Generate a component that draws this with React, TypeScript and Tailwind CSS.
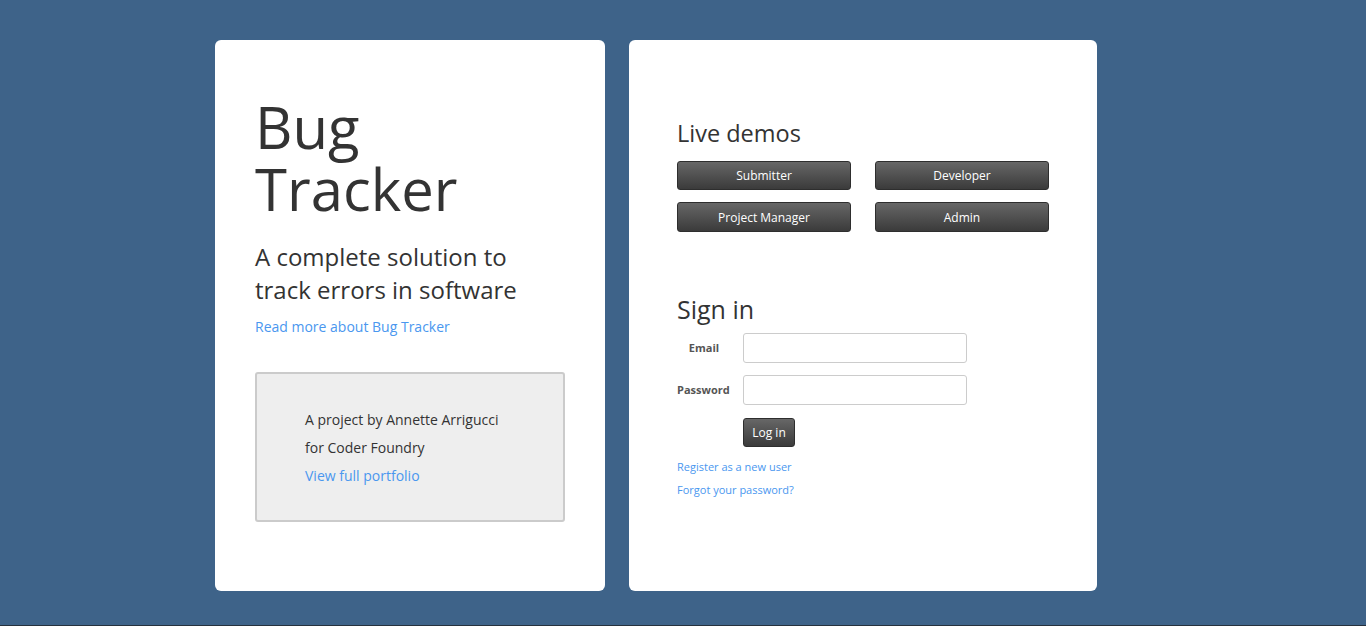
import React from "react";

const demoBtn =
  "h-[29px] w-[174px] rounded-[3px] border border-[#2e2e2e] bg-gradient-to-b from-[#676767] to-[#3b3b3b] pt-px text-[12px] text-white";

export default function App() {
  return (
    <div
      className="h-[626px] w-full overflow-hidden bg-[#3e6389] border-b border-[#26313d]"
      style={{ fontFamily: '"Open Sans", "Noto Sans", sans-serif' }}
    >
      <div className="flex gap-6 pl-[215px] pt-10">
        {/* Left card */}
        <div className="h-[551px] w-[390px] rounded-md bg-white pl-[40px] pt-[56px] text-[#333]">
          <h1 className="text-[58px] leading-[62px] font-normal">
            Bug
            <br />
            Tracker
          </h1>
          <p className="mt-[20px] text-[24px] leading-[33px]">
            A complete solution to
            <br />
            track errors in software
          </p>
          <a className="mt-[11px] block text-[14px] leading-[20px] text-[#4a97ef]">
            Read more about Bug Tracker
          </a>
          <div className="mt-[35px] h-[150px] w-[310px] rounded-[3px] border-2 border-[#cbcbcb] bg-[#eeeeee] pl-[48px] pt-[32px] text-[14px] leading-[28px]">
            <p>A project by Annette Arrigucci</p>
            <p>for Coder Foundry</p>
            <a className="block text-[#4a97ef]">View full portfolio</a>
          </div>
        </div>

        {/* Right card */}
        <div className="h-[551px] w-[468px] rounded-md bg-white pl-[48px] pt-[78px] text-[#333]">
          <h2 className="text-[23.5px] leading-[30px]">Live demos</h2>
          <div className="mt-[13px] grid w-[372px] grid-cols-2 gap-x-6 gap-y-[12px]">
            <button className={demoBtn}>Submitter</button>
            <button className={demoBtn}>Developer</button>
            <button className={`${demoBtn} h-[30px]`}>Project Manager</button>
            <button className={`${demoBtn} h-[30px]`}>Admin</button>
          </div>

          <h2 className="mt-[62px] text-[25px] leading-[30px]">Sign in</h2>
          <div className="mt-[9px] flex flex-col gap-3">
            <div className="flex items-center">
              <label className="w-[66px] text-center text-[11px] font-bold text-[#555] pr-[12px]">
                Email
              </label>
              <input className="h-[30px] w-[224px] rounded-[3px] border border-[#cccccc] bg-white" />
            </div>
            <div className="flex items-center">
              <label className="w-[66px] text-left text-[11px] font-bold text-[#555]">
                Password
              </label>
              <input
                type="password"
                className="h-[30px] w-[224px] rounded-[3px] border border-[#cccccc] bg-white"
              />
            </div>
            <div className="flex pl-[66px] pt-px">
              <button className="h-[29px] w-[52px] rounded-[3px] border border-[#2e2e2e] bg-gradient-to-b from-[#676767] to-[#3b3b3b] pt-px text-[12px] text-white">
                Log in
              </button>
            </div>
          </div>
          <div className="mt-[12px] flex flex-col gap-[7px] text-[11px] leading-[16px] text-[#4a97ef]">
            <a>Register as a new user</a>
            <a>Forgot your password?</a>
          </div>
        </div>
      </div>
    </div>
  );
}
